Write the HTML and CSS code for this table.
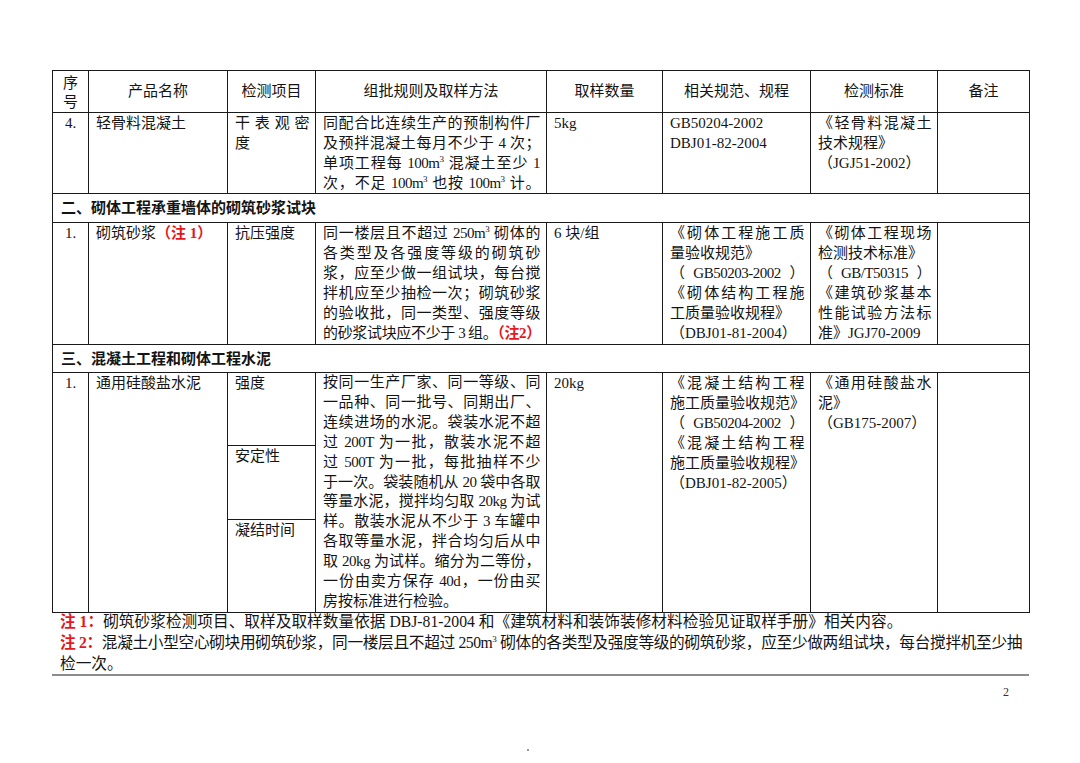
FILE: index.html
```html
<!DOCTYPE html>
<html lang="zh-CN">
<head>
<meta charset="utf-8">
<title>检测项目表</title>
<link rel="stylesheet" href="styles.css">
</head>
<body>
<div class="page">
  <table class="tbl">
    <colgroup>
      <col class="c1"><col class="c2"><col class="c3"><col class="c4"><col class="c5"><col class="c6"><col class="c7"><col class="c8">
    </colgroup>
    <thead>
      <tr class="hd">
        <th class="th-num"><span class="l">序</span><span class="l">号</span></th><th>产品名称</th><th>检测项目</th><th>组批规则及取样方法</th><th>取样数量</th><th>相关规范、规程</th><th>检测标准</th><th>备注</th>
      </tr>
    </thead>
    <tbody>
      <tr class="r4">
        <td class="num">4.</td>
        <td>轻骨料混凝土</td>
        <td><span class="l j">干表观密</span><span class="l">度</span></td>
        <td>
          <span class="l j">同配合比连续生产的预制构件厂</span>
          <span class="l j">及预拌混凝土每月不少于 4 次；</span>
          <span class="l j">单项工程每 100m<sup class="sp">3</sup> 混凝土至少 1</span>
          <span class="l j">次，不足 100m<sup class="sp">3</sup> 也按 100m<sup class="sp">3</sup> 计。</span>
        </td>
        <td>5kg</td>
        <td><span class="l">GB50204-2002</span><span class="l">DBJ01-82-2004</span></td>
        <td><span class="l j">《轻骨料混凝土</span><span class="l">技术规程》</span><span class="l">（JGJ51-2002）</span></td>
        <td></td>
      </tr>
      <tr class="sec sec2">
        <td colspan="8">二、砌体工程承重墙体的砌筑砂浆试块</td>
      </tr>
      <tr class="r1">
        <td class="num">1.</td>
        <td>砌筑砂浆<b class="red">（注 1）</b></td>
        <td>抗压强度</td>
        <td>
          <span class="l j">同一楼层且不超过 250m<sup class="sp">3</sup> 砌体的</span>
          <span class="l j">各类型及各强度等级的砌筑砂</span>
          <span class="l j">浆，应至少做一组试块，每台搅</span>
          <span class="l j">拌机应至少抽检一次；砌筑砂浆</span>
          <span class="l j">的验收批，同一类型、强度等级</span>
          <span class="l j tight">的砂浆试块应不少于 3 组。<b class="red">（注2）</b></span>
        </td>
        <td>6 块/组</td>
        <td>
          <span class="l j">《砌体工程施工质</span>
          <span class="l">量验收规范》</span>
          <span class="l j">（GB50203-2002）</span>
          <span class="l j">《砌体结构工程施</span>
          <span class="l">工质量验收规程》</span>
          <span class="l">（DBJ01-81-2004）</span>
        </td>
        <td>
          <span class="l j">《砌体工程现场</span>
          <span class="l">检测技术标准》</span>
          <span class="l j">（GB/T50315）</span>
          <span class="l j">《建筑砂浆基本</span>
          <span class="l j">性能试验方法标</span>
          <span class="l">准》JGJ70-2009</span>
        </td>
        <td></td>
      </tr>
      <tr class="sec sec3">
        <td colspan="8">三、混凝土工程和砌体工程水泥</td>
      </tr>
      <tr class="s1">
        <td class="num" rowspan="3">1.</td>
        <td rowspan="3">通用硅酸盐水泥</td>
        <td>强度</td>
        <td rowspan="3" class="dense">
          <span class="l j">按同一生产厂家、同一等级、同</span>
          <span class="l j">一品种、同一批号、同期出厂、</span>
          <span class="l j">连续进场的水泥。袋装水泥不超</span>
          <span class="l j">过 200T 为一批，散装水泥不超</span>
          <span class="l j">过 500T 为一批，每批抽样不少</span>
          <span class="l j">于一次。袋装随机从 20 袋中各取</span>
          <span class="l j">等量水泥，搅拌均匀取 20kg 为试</span>
          <span class="l j">样。散装水泥从不少于 3 车罐中</span>
          <span class="l j">各取等量水泥，拌合均匀后从中</span>
          <span class="l j">取 20kg 为试样。缩分为二等份，</span>
          <span class="l j">一份由卖方保存 40d，一份由买</span>
          <span class="l">房按标准进行检验。</span>
        </td>
        <td rowspan="3">20kg</td>
        <td rowspan="3">
          <span class="l j">《混凝土结构工程</span>
          <span class="l">施工质量验收规范》</span>
          <span class="l j">（GB50204-2002）</span>
          <span class="l j">《混凝土结构工程</span>
          <span class="l">施工质量验收规程》</span>
          <span class="l">（DBJ01-82-2005）</span>
        </td>
        <td rowspan="3">
          <span class="l j">《通用硅酸盐水</span>
          <span class="l">泥》</span>
          <span class="l">（GB175-2007）</span>
        </td>
        <td rowspan="3"></td>
      </tr>
      <tr class="s2">
        <td>安定性</td>
      </tr>
      <tr class="s3">
        <td>凝结时间</td>
      </tr>
    </tbody>
  </table>

  <div class="notes">
    <span class="l"><b class="red">注 1：</b>砌筑砂浆检测项目、取样及取样数量依据 DBJ-81-2004 和《建筑材料和装饰装修材料检验见证取样手册》相关内容。</span>
    <span class="l j"><b class="red">注 2：</b>混凝土小型空心砌块用砌筑砂浆，同一楼层且不超过 250m<sup class="sp">3</sup> 砌体的各类型及强度等级的砌筑砂浆，应至少做两组试块，每台搅拌机至少抽</span>
    <span class="l">检一次。</span>
  </div>

  <div class="rule"></div>
  <div class="pno">2</div>
  <div class="dotrow"><span class="dot"></span></div>
</div>
</body>
</html>
```

FILE: styles.css
```css
* {
  box-sizing: border-box;
}

html,
body {
  margin: 0;
  padding: 0;
  background: #ffffff;
}

body {
  font-family: "Liberation Serif", "Noto Sans CJK SC", serif;
  color: #141414;
}

.page {
  width: 1080px;
  height: 763px;
  padding: 70px 0 0 52px;
  overflow: hidden;
}

.tbl {
  border-collapse: collapse;
  table-layout: fixed;
  width: 977px;
  font-size: 15px;
  line-height: 20px;
}

.c1 { width: 36px; }
.c2 { width: 139px; }
.c3 { width: 88px; }
.c4 { width: 231px; }
.c5 { width: 116px; }
.c6 { width: 148px; }
.c7 { width: 127px; }
.c8 { width: 92px; }

.tbl td,
.tbl th {
  border: 1px solid #1a1a1a;
  padding: 0 6px 0 7px;
  vertical-align: top;
  text-align: left;
  font-weight: normal;
}

.tbl th {
  vertical-align: middle;
  text-align: center;
  padding: 0 6px;
  line-height: 19px;
}

.tbl th.th-num {
  padding: 3px 2px 0;
}

.hd { height: 42px; }
.r4 { height: 81px; }
.sec2 { height: 29px; }
.r1 { height: 122px; }
.sec3 { height: 28px; }
.s1 { height: 73px; }
.s2 { height: 73px; }
.s3 { height: 93px; }

.tbl td.dense {
  line-height: 19.9px;
}

.tbl td.num {
  text-align: center;
  padding-left: 2px;
  padding-right: 2px;
}

.sec td {
  font-weight: bold;
  vertical-align: middle;
  padding: 0 0 0 8px;
}

.l {
  display: block;
}

.j {
  text-align: justify;
  text-align-last: justify;
  letter-spacing: -0.5px;
}

.tight {
  letter-spacing: -1.3px;
}

.sp {
  font-size: 9px;
  line-height: 0;
  vertical-align: 6px;
  letter-spacing: 0;
}

.red {
  color: #e3171c;
  font-weight: bold;
}

.notes {
  width: 970px;
  margin-top: -2px;
  padding-left: 8px;
  font-size: 15.7px;
  line-height: 21px;
}

.rule {
  width: 977px;
  height: 2px;
  background: #8c8c8c;
}

.pno {
  width: 977px;
  padding-right: 20px;
  text-align: right;
  font-size: 12px;
  line-height: 14px;
  margin-top: 9px;
  color: #333333;
}

.dotrow {
  width: 977px;
  display: flex;
  justify-content: center;
  margin-top: 50px;
}

.dot {
  width: 2px;
  height: 2px;
  background: #9a9a9a;
  margin-left: -26px;
}
```
